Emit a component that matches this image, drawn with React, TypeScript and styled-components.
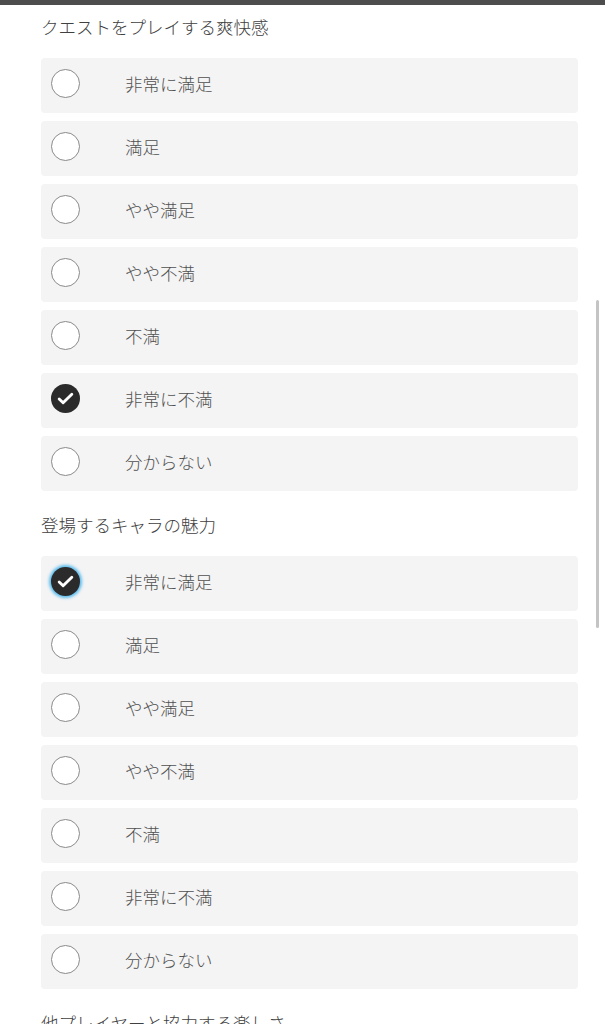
import React from 'react';
import styled, { createGlobalStyle, css } from 'styled-components';

const GlobalStyle = createGlobalStyle`
  html, body {
    margin: 0;
    padding: 0;
    background: #fff;
  }
  body {
    font-family: "Noto Sans CJK JP", "Noto Sans", sans-serif;
    overflow: hidden;
  }
`;

const TopBar = styled.div`
  height: 5px;
  background: #4d4d4d;
`;

const Page = styled.div`
  padding: 10px 27px 0 41px;
`;

const Section = styled.section`
  & + & {
    margin-top: 22px;
  }
`;

const Question = styled.div`
  font-size: 17.5px;
  font-weight: 300;
  line-height: 24px;
  color: #404040;
  margin-bottom: 19px;
  white-space: nowrap;
`;

const Options = styled.div`
  display: flex;
  flex-direction: column;
  gap: 8px;
`;

const Option = styled.label`
  display: flex;
  align-items: center;
  height: 55px;
  box-sizing: border-box;
  padding: 0 0 4px 10px;
  background: #f4f4f4;
  border-radius: 4px;
`;

const Radio = styled.span<{ $checked: boolean; $focused: boolean }>`
  box-sizing: border-box;
  width: 29px;
  height: 29px;
  border-radius: 50%;
  border: 1.5px solid #8a8a8a;
  background: #fff;
  display: flex;
  align-items: center;
  justify-content: center;
  flex-shrink: 0;

  ${({ $checked }) =>
    $checked &&
    css`
      border: none;
      background: #2b2b2b;
    `}

  ${({ $focused }) =>
    $focused &&
    css`
      box-shadow: 0 0 3px 2px rgba(40, 170, 235, 0.75);
    `}
`;

const OptionText = styled.span`
  margin-left: 45px;
  font-size: 17.5px;
  font-weight: 300;
  color: #505050;
`;

const Scrollbar = styled.div`
  position: fixed;
  right: 6px;
  top: 300px;
  width: 3px;
  height: 328px;
  border-radius: 2px;
  background: #c4c4c4;
`;

const Check = () => (
  <svg width="19" height="19" viewBox="0 0 24 24" fill="none">
    <path d="M4 12.5l5 5L20 6.5" stroke="#fff" strokeWidth="3.6" strokeLinecap="round" strokeLinejoin="round" />
  </svg>
);

const choices = ['非常に満足', '満足', 'やや満足', 'やや不満', '不満', '非常に不満', '分からない'];

const questions = [
  { title: 'クエストをプレイする爽快感', checked: 5, focused: false },
  { title: '登場するキャラの魅力', checked: 0, focused: true },
  { title: '他プレイヤーと協力する楽しさ', checked: -1, focused: false },
];

export default function App() {
  return (
    <>
      <GlobalStyle />
      <TopBar />
      <Page>
        {questions.map((q) => (
          <Section key={q.title}>
            <Question>{q.title}</Question>
            <Options>
              {choices.map((c, i) => (
                <Option key={c}>
                  <Radio $checked={q.checked === i} $focused={q.focused && q.checked === i}>
                    {q.checked === i && <Check />}
                  </Radio>
                  <OptionText>{c}</OptionText>
                </Option>
              ))}
            </Options>
          </Section>
        ))}
      </Page>
      <Scrollbar />
    </>
  );
}
